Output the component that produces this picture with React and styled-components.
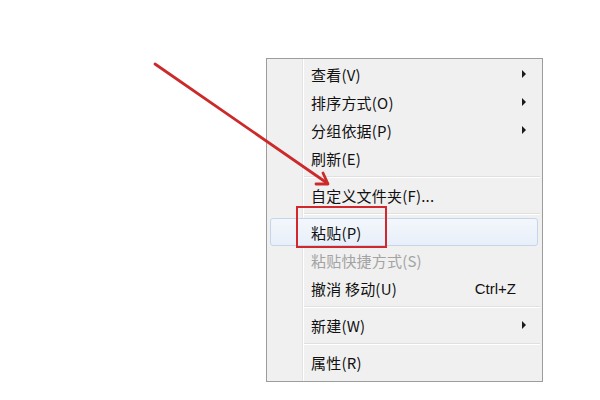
import React from "react";
import styled, { createGlobalStyle } from "styled-components";

const Global = createGlobalStyle`
  html, body { margin: 0; padding: 0; background: #ffffff; }
  body { font-family: "Noto Sans CJK SC", "Noto Sans", sans-serif; }
`;

const Page = styled.div`
  position: relative;
  width: 600px;
  height: 400px;
  box-sizing: border-box;
  padding: 58px 0 0 266px;
  overflow: hidden;
`;

const Menu = styled.div`
  width: 277px;
  box-sizing: border-box;
  border: 1px solid #9c9c9c;
  padding: 1px 0 5px;
  display: flex;
  flex-direction: column;
  background: linear-gradient(
    to right,
    #f0f0f0 35px,
    #e2e3e3 35px,
    #e2e3e3 36px,
    #ffffff 36px,
    #ffffff 37px,
    #f0f0f0 37px
  );
`;

const Item = styled.div`
  height: 28px;
  margin: 0 4px 0 3px;
  box-sizing: border-box;
  display: flex;
  align-items: center;
  padding: 0 11px 0 40px;
  font-size: 15px;
  color: ${(p) => (p.$disabled ? "#a3a3a3" : "#111111")};
  border: 1px solid ${(p) => (p.$active ? "#c5d6ec" : "transparent")};
  border-radius: 3px;
  background: ${(p) =>
    p.$active ? "linear-gradient(to bottom, #f3f7fc, #e8eff9)" : "transparent"};
`;

const Label = styled.span`
  flex: 1;
  white-space: nowrap;
  letter-spacing: 0.2px;
`;

const Shortcut = styled.span`
  margin-right: 10px;
  font-family: "Liberation Sans", "Noto Sans", sans-serif;
  font-size: 15px;
`;

const SubArrow = styled.span`
  width: 0;
  height: 0;
  border-top: 4px solid transparent;
  border-bottom: 4px solid transparent;
  border-left: 4px solid #1b1b1b;
`;

const Separator = styled.div`
  height: 9px;
  display: flex;
  align-items: center;
  padding: 0 2px 0 37px;
  &::before {
    content: "";
    flex: 1;
    height: 1px;
    background: #e0e0e0;
    border-bottom: 1px solid #ffffff;
  }
`;

const Overlay = styled.svg`
  position: absolute;
  left: 0;
  top: 0;
  width: 600px;
  height: 400px;
  pointer-events: none;
`;

const items = [
  { label: "查看(V)", sub: true },
  { label: "排序方式(O)", sub: true },
  { label: "分组依据(P)", sub: true },
  { label: "刷新(E)" },
  { sep: true },
  { label: "自定义文件夹(F)..." },
  { sep: true },
  { label: "粘贴(P)", active: true },
  { label: "粘贴快捷方式(S)", disabled: true },
  { label: "撤消 移动(U)", shortcut: "Ctrl+Z" },
  { sep: true },
  { label: "新建(W)", sub: true },
  { sep: true },
  { label: "属性(R)" },
];

export default function App() {
  return (
    <>
      <Global />
      <Page>
        <Menu>
          {items.map((it, i) =>
            it.sep ? (
              <Separator key={i} />
            ) : (
              <Item key={i} $active={it.active} $disabled={it.disabled}>
                <Label>{it.label}</Label>
                {it.shortcut && <Shortcut>{it.shortcut}</Shortcut>}
                {it.sub && <SubArrow />}
              </Item>
            )
          )}
        </Menu>
        <Overlay viewBox="0 0 600 400">
          <line
            x1="155"
            y1="64"
            x2="327"
            y2="183"
            stroke="#cc2a2a"
            strokeWidth="2.8"
            strokeLinecap="round"
          />
          <polyline
            points="316,184 328,184 323,173"
            fill="none"
            stroke="#cc2a2a"
            strokeWidth="2.8"
            strokeLinecap="round"
            strokeLinejoin="round"
          />
          <rect
            x="297"
            y="207"
            width="89"
            height="40"
            fill="none"
            stroke="#d0282c"
            strokeWidth="2"
          />
        </Overlay>
      </Page>
    </>
  );
}
